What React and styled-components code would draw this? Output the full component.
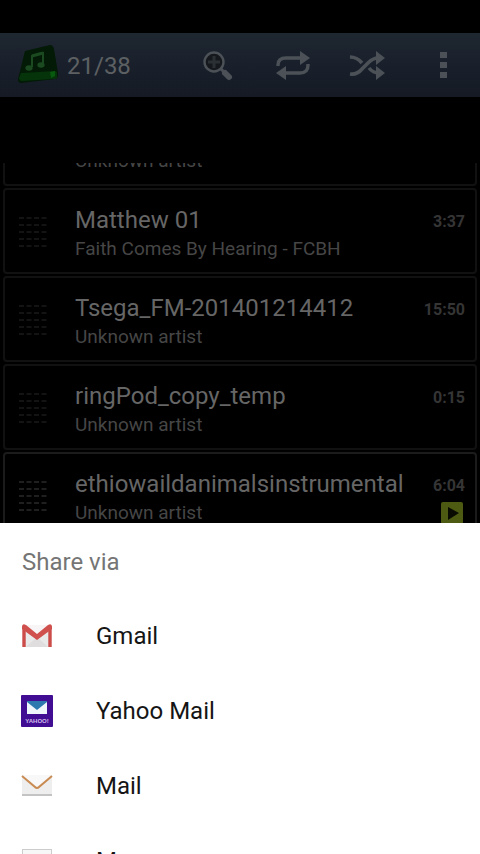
import React, { useLayoutEffect, useRef } from "react";
import styled, { createGlobalStyle } from "styled-components";

const GlobalStyle = createGlobalStyle`
  * {
    box-sizing: border-box;
  }

  body {
    margin: 0;
    background: #000000;
    font-family: Roboto, "Liberation Sans", sans-serif;
  }

  button {
    padding: 0;
    border: 0;
    background: none;
    color: inherit;
    font: inherit;
    text-align: left;
    cursor: pointer;
  }

  svg {
    display: block;
  }
`;

const Screen = styled.div`
  display: flex;
  flex-direction: column;
  height: 100vh;
  overflow: hidden;
`;

const Player = styled.main`
  flex: 1;
  min-height: 0;
  display: flex;
  flex-direction: column;
  padding-top: 33px;
`;

const Toolbar = styled.header`
  flex: none;
  display: flex;
  align-items: center;
  height: 64px;
  margin-bottom: 66px;
  padding: 2px 0 0 16px;
  background: linear-gradient(#1f2731, #19202b 50%, #151a24);
  color: #4b5156;
`;

const Count = styled.h1`
  flex: 1;
  margin: 0 0 0 7px;
  font-size: 24px;
  font-weight: 400;
  line-height: 28px;
  color: #5d6063;
`;

const ToolButton = styled.button`
  display: flex;
  justify-content: center;
  width: 75px;
`;

const TrackList = styled.ul`
  flex: 1;
  min-height: 0;
  margin: 0;
  padding: 0 3px;
  list-style: none;
  overflow-y: auto;
  scrollbar-width: none;
`;

const Track = styled.li`
  display: flex;
  height: 86px;
  margin-bottom: 2px;
  padding: 16px 10px 0 14px;
  border: 2px solid ${(props) => (props.$current ? "#1b1b1b" : "#111111")};
  border-radius: 4px;
`;

const Grip = styled.svg`
  flex: none;
  margin: 11px 28px 0 0;
  color: ${(props) => (props.$current ? "#1f1f1f" : "#131313")};
`;

const TrackText = styled.div`
  flex: 1;
  min-width: 0;
  white-space: nowrap;
`;

const TrackTitle = styled.div`
  font-size: 24px;
  line-height: 28px;
  color: #666666;
`;

const Artist = styled.div`
  font-size: 19px;
  line-height: 30px;
  color: #464646;
`;

const TrackSide = styled.div`
  display: flex;
  flex-direction: column;
  align-items: flex-end;
  padding-top: 4px;
`;

const Duration = styled.span`
  font-size: 16px;
  font-weight: 700;
  line-height: 24px;
  color: #353535;
`;

const PlayButton = styled.button`
  margin: 4px 2px 0 0;
`;

const Sheet = styled.section`
  flex: 0 0 331px;
  overflow: hidden;
  background: #ffffff;
`;

const SheetTitle = styled.h2`
  margin: 0;
  padding: 25px 22px 22px;
  font-size: 24px;
  font-weight: 400;
  line-height: 28px;
  color: #757575;
`;

const Option = styled.button`
  display: flex;
  align-items: center;
  gap: 43px;
  width: 100%;
  height: 75px;
  padding: 0 21px;
  font-size: 24px;
  line-height: 28px;
  color: #151515;
`;

const AppIcon = () => (
  <svg width="44" height="44" viewBox="0 0 44 44" aria-hidden="true">
    <path d="M9 7 34 1q3 0 4 4l4 24q0 6-3 6L5 39q-3 0-3-4Z" fill="#031a06" />
    <path d="M5 29 39 27l2 1v5q0 2-3 2L6 37q-3 0-3-3Z" fill="#05330a" />
    <path d="m34 28 5-1v5l-4 2Z" fill="#075a0e" />
    <path d="M16 23V12l11-3v11" fill="none" stroke="#1b4a20" strokeWidth="2" />
    <path d="M16 12 27 9" stroke="#1b4a20" strokeWidth="3" />
    <ellipse cx="13" cy="24" rx="3.6" ry="2.8" fill="#1b4a20" />
    <ellipse cx="25" cy="21" rx="3.6" ry="2.8" fill="#1b4a20" />
  </svg>
);

const SearchIcon = () => (
  <svg width="32" height="32" viewBox="0 0 32 32" aria-hidden="true">
    <circle cx="12" cy="12" r="9.5" fill="#15191e" stroke="currentColor" strokeWidth="2.4" />
    <path d="M12 6v12M6 12h12" stroke="#2b3034" strokeWidth="3" />
    <path d="m18.5 18.5 5 5" stroke="currentColor" strokeWidth="3" />
    <path d="m23 23 4 4" stroke="currentColor" strokeWidth="6" strokeLinecap="round" />
  </svg>
);

const RepeatIcon = () => (
  <svg width="36" height="32" viewBox="0 0 36 32" aria-hidden="true">
    <g fill="none" stroke="currentColor" strokeWidth="3.4">
      <path d="M3 16v-1q0-7 8-7h16" />
      <path d="M33 14v1q0 8-8 8H9" />
    </g>
    <path d="m25 1 10 7-10 7ZM11 16l-10 7 10 7Z" fill="currentColor" />
  </svg>
);

const ShuffleIcon = () => (
  <svg width="38" height="32" viewBox="0 0 38 32" aria-hidden="true">
    <g fill="none" stroke="currentColor" strokeWidth="3.6">
      <path d="M1 24q7 1 12-5l6-6q5-5 10-5" />
      <path d="M1 7q7 0 12 6M20 18q4 5 10 5" />
    </g>
    <path d="m27 1 9 7-9 7ZM27 16l9 7-9 7Z" fill="currentColor" />
  </svg>
);

const MoreIcon = () => (
  <svg width="8" height="28" viewBox="0 0 8 28" aria-hidden="true">
    <path d="M1 0h7v6H1ZM1 10h7v6H1ZM1 20h7v6H1Z" fill="currentColor" />
  </svg>
);

const PlayIcon = () => (
  <svg width="22" height="22" viewBox="0 0 22 22" aria-hidden="true">
    <rect width="22" height="22" rx="2" fill="#4d5b12" />
    <path d="m7 5 11 6-11 7Z" fill="#090b02" />
  </svg>
);

const GmailIcon = () => (
  <svg width="32" height="32" viewBox="0 0 32 32" aria-hidden="true">
    <path d="M2 5h28v22H2Z" fill="#e9e9e9" />
    <path d="M4 5h24L16 16Z" fill="#f7f5f5" />
    <path d="m5 27 11-10 11 10Z" fill="#dfdddd" />
    <path d="M3 27V6M29 27V6" stroke="#cb4c49" strokeWidth="3.4" />
    <path d="M1 7q0-4 4-2l11 9 11-9q4-2 4 2v2L16 20 1 9Z" fill="#cf504d" />
  </svg>
);

const YahooText = styled.text`
  font-family: "Liberation Sans", sans-serif;
  font-size: 6px;
  font-weight: 700;
`;

const YahooIcon = () => (
  <svg width="32" height="32" viewBox="0 0 32 32" aria-hidden="true">
    <rect width="32" height="32" rx="1" fill="#410e93" />
    <path d="M6 6h20v13H6Z" fill="#eef5fb" />
    <path d="M6 6h20v1l-10 8L6 7Z" fill="#2e78b0" />
    <YahooText x="16" y="28" textAnchor="middle" fill="#d2bde9">YAHOO!</YahooText>
  </svg>
);

const MailIcon = () => (
  <svg width="32" height="32" viewBox="0 0 32 32" aria-hidden="true">
    <path d="M1 5h30v19H1Z" fill="#eeeeee" />
    <path d="M1 5h30L16 17Z" fill="#f8f8f8" />
    <path d="M1 24h30v2H1Z" fill="#c3c3c3" />
    <path d="m1 6 13 11q2 2 4 0L31 6" fill="none" stroke="#c98b51" strokeWidth="2" />
  </svg>
);

const MessagesIcon = () => (
  <svg width="32" height="32" viewBox="0 0 32 32" aria-hidden="true">
    <rect x="1.5" y="4.5" width="29" height="24" fill="#f7f7f7" stroke="#cccccc" />
  </svg>
);

const tracks = [
  { id: 20, title: "Matthew 02", artist: "Unknown artist", time: "3:12" },
  { id: 21, title: "Matthew 01", artist: "Faith Comes By Hearing - FCBH", time: "3:37" },
  { id: 22, title: "Tsega_FM-201401214412", artist: "Unknown artist", time: "15:50" },
  { id: 23, title: "ringPod_copy_temp", artist: "Unknown artist", time: "0:15" },
  { id: 24, title: "ethiowaildanimalsinstrumental", artist: "Unknown artist", time: "6:04", current: true },
];

const targets = [
  { name: "Gmail", Icon: GmailIcon },
  { name: "Yahoo Mail", Icon: YahooIcon },
  { name: "Mail", Icon: MailIcon },
  { name: "Messages", Icon: MessagesIcon },
];

const gripRows = [1, 8, 15, 22, 29];

const App = () => {
  const listRef = useRef(null);

  // the list opens partly scrolled, with the first track cut off
  useLayoutEffect(() => {
    listRef.current.scrollTop = 63;
  }, []);

  return (
    <Screen>
      <GlobalStyle />
      <Player>
        <Toolbar>
          <AppIcon />
          <Count>21/38</Count>
          <ToolButton aria-label="Search"><SearchIcon /></ToolButton>
          <ToolButton aria-label="Repeat"><RepeatIcon /></ToolButton>
          <ToolButton aria-label="Shuffle"><ShuffleIcon /></ToolButton>
          <ToolButton aria-label="More options"><MoreIcon /></ToolButton>
        </Toolbar>
        <TrackList ref={listRef}>
          {tracks.map((track) => (
            <Track key={track.id} $current={track.current}>
              <Grip width="28" height="32" viewBox="0 0 28 32" $current={track.current}>
                {gripRows.map((y) => (
                  <path key={y} d={`M0 ${y}h28`} stroke="currentColor" strokeWidth="2" strokeDasharray="5 2.5" />
                ))}
              </Grip>
              <TrackText>
                <TrackTitle>{track.title}</TrackTitle>
                <Artist>{track.artist}</Artist>
              </TrackText>
              <TrackSide>
                <Duration>{track.time}</Duration>
                {track.current && (
                  <PlayButton aria-label="Play"><PlayIcon /></PlayButton>
                )}
              </TrackSide>
            </Track>
          ))}
        </TrackList>
      </Player>
      <Sheet>
        <SheetTitle>Share via</SheetTitle>
        {targets.map(({ name, Icon }) => (
          <Option key={name}>
            <Icon />
            {name}
          </Option>
        ))}
      </Sheet>
    </Screen>
  );
};

export default App;
